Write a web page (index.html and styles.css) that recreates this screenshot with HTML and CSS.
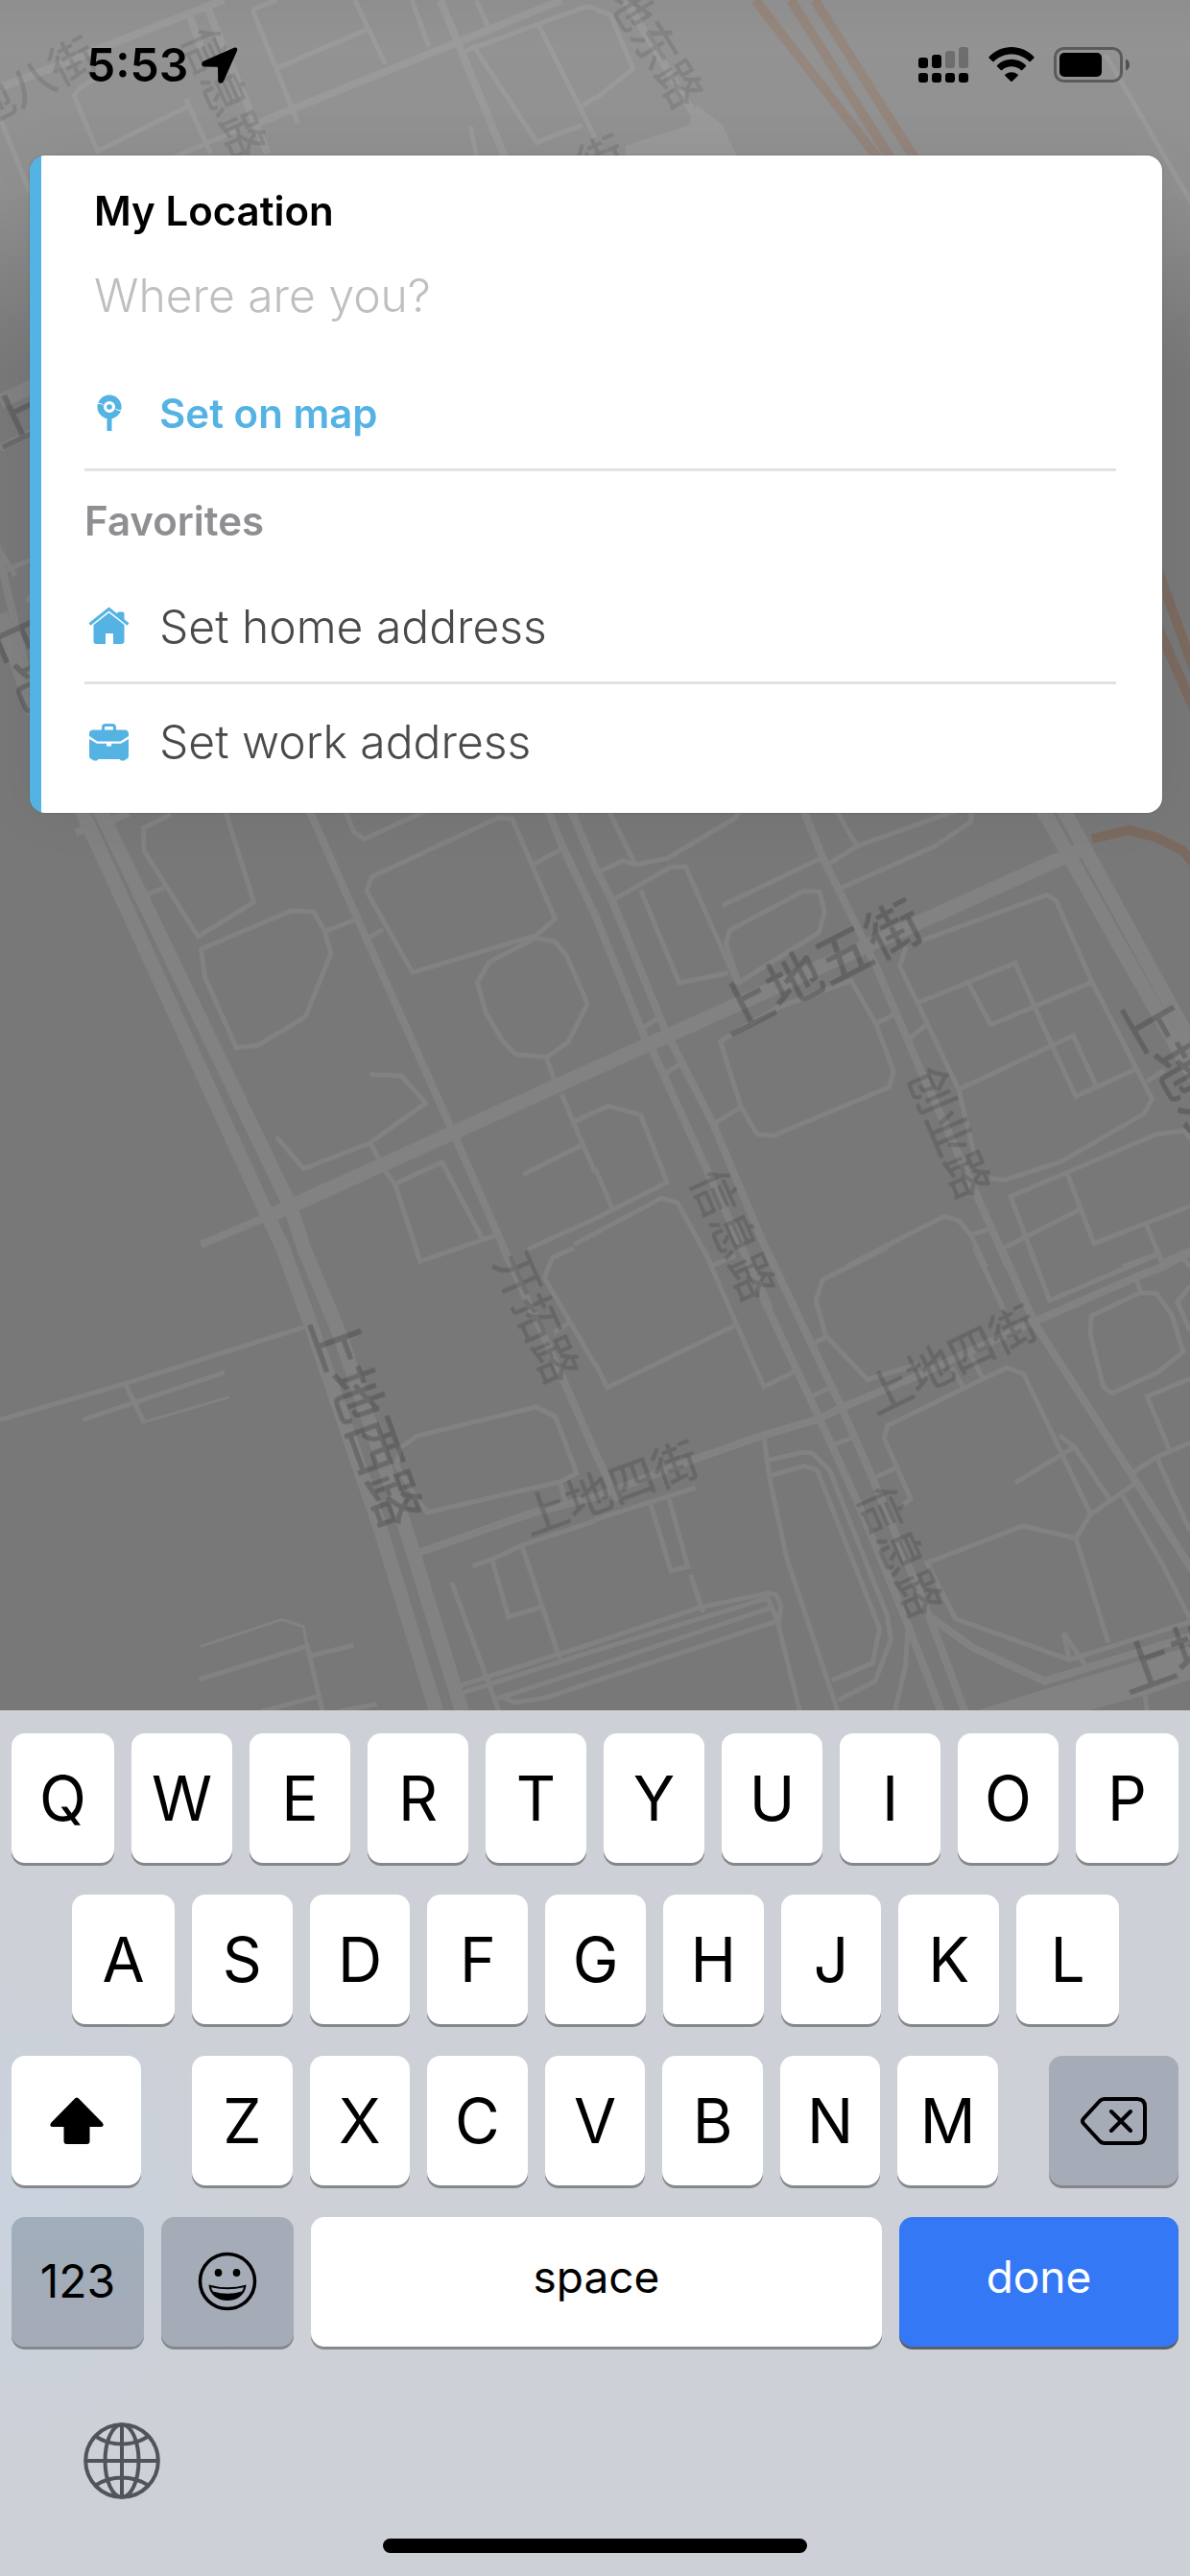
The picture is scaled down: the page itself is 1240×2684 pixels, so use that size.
FILE: index.html
```html
<!DOCTYPE html>
<html lang="en">
<head>
    <meta charset="UTF-8">
    <meta name="viewport" content="width=device-width, initial-scale=1.0">
    <title>My Location</title>
    <link rel="stylesheet" href="styles.css">
</head>
<body>
    <main class="map-area">
        <!-- Map -->
        <svg class="map" viewBox="0 0 1240 1782" preserveAspectRatio="xMidYMin slice" aria-hidden="true">
            <defs>
                <linearGradient id="fade" x1="0" y1="0" x2="0" y2="1">
                    <stop offset="0" stop-color="#fff" stop-opacity=".17"/>
                    <stop offset=".12" stop-color="#fff" stop-opacity=".2"/>
                    <stop offset=".5" stop-color="#fff" stop-opacity=".18"/>
                    <stop offset=".85" stop-color="#fff" stop-opacity=".04"/>
                    <stop offset="1" stop-color="#fff" stop-opacity="0"/>
                </linearGradient>
            </defs>

            <g class="roads">
                <!-- north west -->
                <g transform="scale(.3954 .3333)">
                    <path class="mid" d="M0 275L545 20L590 0M545 20L705 480M500 50L530 150M680 385L1210 130L1480 0M1160 0L1330 490"/>
                    <path d="M490 310L555 480M0 370L78 600M260 480L195 300L210 275L260 240M260 470L500 330M460 490L620 410M665 30L770 340L785 385M665 30L730 0M725 215L970 90M935 0L1015 200M1085 0L1130 145M1255 0L1285 80M1225 160L1545 20L1568 25M1245 140L1415 445L1535 390M1420 80L1568 430M1530 335L1568 305M1240 395L1255 485"/>
                    <path class="wide" d="M0 1255L90 1205"/>
                    <path class="mid" d="M0 1400L90 1350M-20 1650L90 2200"/>
                    <path d="M0 1790L90 1745M0 1720L40 1800M70 1880L90 1850"/>
                    <path class="wide" d="M0 1920L90 2230"/>
                </g>
                <!-- north east -->
                <g transform="translate(620 0) scale(.3954 .3333)">
                    <path class="mid" d="M80 0L265 365"/>
                    <path d="M0 30L40 45L100 215L0 310M1345 170L1575 640M1490 1830L1580 2080"/>
                    <path class="area" d="M80 455L250 390L255 350L270 330L335 390L375 490L80 490Z"/>
                </g>
                <!-- middle west -->
                <g transform="translate(0 840) scale(.3954 .3333)">
                    <path class="wide" d="M210 0L705 1280L745 1380L825 1640L1000 2250L1150 2830M258 0L765 1250L800 1380L895 1650L1075 2280L1218 2830M720 1275L1568 820"/>
                    <path class="mid" d="M530 1370L720 1275M810 0L1190 1010L1350 1440M1440 0L1480 120L1568 340M1500 0L1568 190M200 82L250 60M290 45L340 20"/>
                    <path d="M450 25L378 68L380 140L522 407L669 300L590 0M390 275L432 255M530 447L768 326L827 330L855 390L872 460L805 658L680 747L623 755L540 535ZM855 392L935 355M972 410L1010 385M905 0L933 82L960 102L1150 0M980 220L1315 35L1350 40L1463 352L1415 402L1087 520L966 265ZM1408 180L1478 135M1410 412L1463 424L1492 465L1548 617L1497 738L1440 785L1358 775L1325 735L1280 645L1258 550L1290 487ZM1440 785L1465 870M1480 900L1510 985L1568 1145M1515 985L1568 955M1378 1152L1535 1058M975 838L1058 843L1122 928L975 1052L800 1133L728 1033M975 1052L1000 1105M1015 1140L1042 1185L1107 1423L1310 1340M1042 1180L1165 1113L1270 1350M1390 1385L1568 1290"/>
                </g>
                <!-- middle east -->
                <g transform="translate(620 840) scale(.3954 .3333)">
                    <path class="wide" d="M0 820L1280 135M1175 0L1580 850M1230 0L1580 760"/>
                    <path class="mid" d="M0 190L45 295L185 700L310 990L470 1440M0 340L130 720L150 760L300 1150L460 1570M545 0L600 160L700 400L740 500L860 830L1000 1200L1090 1440"/>
                    <path d="M30 0L105 180M10 205L75 170L105 183L190 163L372 35L380 0M45 295L200 190L238 188L375 555M120 262L222 552L350 522M335 310L600 160M620 178L690 125L960 10M630 0L690 125M650 255L895 125L992 48L990 0M380 550L345 430L355 388L550 265L592 267L605 330L590 395ZM860 420L1190 278L1215 295L1310 550L1468 915L1448 960L1230 1110L1080 1168L1040 1163M820 440L803 500L850 615L958 885L1000 1090M850 615L1107 490L1205 750L1267 907L1425 822M985 555L1043 683L1310 550M960 885L1260 717L1325 885M330 735L480 630L675 545L740 680L787 830L775 878L470 1030L427 1025L385 940ZM740 680L790 650M830 725L870 685M310 995L385 940M130 690L170 660M180 840L225 805M1455 860L1500 825M0 955L35 937L120 965L190 1175L0 1290M0 1130L45 1255M-55 1370L175 1225L218 1240L310 1440M660 1440L920 1282L958 1295L990 1340L1030 1440M990 1340L1045 1320M1165 1440L1095 1220L1480 1025L1555 1015L1568 1040M1245 1150L1315 1367L1568 1250M1070 1385L1275 1262M1450 1300L1495 1425L1568 1385M1390 1440L1480 1400"/>
                </g>
                <!-- south west -->
                <g transform="translate(0 1300) scale(.3954 .3333)">
                    <path class="mid" d="M1325 0L1350 60L1480 400L1568 640L1630 790M1100 955L1400 830L1568 780"/>
                    <path d="M0 538L330 425L810 245M218 538L592 390M330 425L380 547M525 1350L810 1245L850 1450M820 1275L932 1243M690 1450L845 1400M890 1450L993 1427M1513 0L1455 32L1435 95L1568 365M1460 265L1500 235M1055 625L1100 588L1412 498L1463 527L1520 705L1475 732L1127 827L1100 790L1045 680ZM1475 732L1490 790M1245 995L1295 975L1375 930L1568 855M1298 980L1340 1155L1430 1122M1375 930L1475 1285M1190 1045L1315 1450M1215 1368L1568 1235M1222 1390L1568 1260M1310 1410L1568 1310M1325 1405L1355 1422L1435 1408L1568 1355"/>
                    <path class="thin" d="M380 545L605 467M528 1247L743 1162L800 1185L808 1240"/>
                </g>
                <!-- south east -->
                <g transform="translate(620 1300) scale(.3954 .3333)">
                    <path class="mid" d="M0 780L265 660L435 590L590 535L650 500L850 400L1160 230L1430 90L1495 60L1568 15M450 0L570 300L650 500L735 730L880 1150L975 1450M440 150L590 530L690 790L825 1180L912 1450M1070 0L1160 240L1420 720L1575 1010M885 1155L995 1250L1185 1355L1568 1215"/>
                    <path d="M285 0L445 435L532 385M310 55L370 25M0 360L32 437L375 240M770 0L600 100L582 165L608 275L718 412L850 365M575 300L608 280M570 465L615 440M630 615L675 595M735 720L800 685M1000 0L1080 200M1145 0L1198 165L1485 20L1475 0M1485 20L1495 50M1425 90L1438 140M1308 212L1438 140L1480 143L1520 210L1550 325L1483 390L1362 455L1340 435L1305 270ZM1568 120L1535 170L1568 260M1550 30L1568 60M1568 410L1455 465L1515 635M1568 610L1480 655L1420 700M1480 655L1568 885M1305 830L1130 395L1085 375L772 555L762 595L832 785L805 810M940 375L970 435M990 335L1020 405M1107 735L1260 625M1225 587L1265 625L1355 785M1425 735L1305 835L1267 908L1127 870L875 985L950 1160L1250 1288L1568 1170M1267 908L1353 1235M1390 775L1500 1000L1568 1160M1250 1288L1235 1205L1295 1310M445 595L460 720L505 970L640 1450M455 665L545 640L572 642L618 695L770 1150L780 1225L738 1355L640 1415M465 712L550 682L585 695L750 1190L732 1298L625 1352M825 1180L818 1310L790 1450M0 850L265 750M145 795L200 1010L245 998L195 785M252 1022L285 1140M0 1235L275 1125L455 1080L478 1085L490 1120L485 1165L0 1355M0 1260L455 1095L480 1165L540 1450M0 1310L465 1125M1450 1400L1455 1450"/>
                    <path class="area" d="M1000 1450L1200 1375L1568 1245L1568 1350L1450 1400L1290 1450Z"/>
                </g>
            </g>

            <!-- highways -->
            <g class="highways">
                <path d="M787 0L915 165M824 0L928 165M849 0L953 165M1205 590L1245 700M1205 650L1245 740"/>
                <path d="M1138 874L1176 865L1204 872L1232 886L1246 902"/>
            </g>

            <!-- street names -->
            <g class="streets major">
                <text transform="translate(854 1009) rotate(-27)" y="20">上地五街</text>
                <text transform="translate(380 1480) rotate(70)" y="20">上地西路</text>
                <text class="from-start" transform="translate(1185 1040) rotate(60)" y="20">上地东路</text>
                <text class="from-start" transform="translate(1168 1746) rotate(-20)" y="20">上地三街</text>
                <text transform="translate(18 437) rotate(-25)" y="20">上</text>
                <text class="from-start" transform="translate(3 632) rotate(66)" y="20">上地</text>
            </g>
            <g class="streets minor">
                <text transform="translate(989 1180) rotate(67)" y="17">创业路</text>
                <text transform="translate(764 1287) rotate(66)" y="17">信息路</text>
                <text transform="translate(559 1373) rotate(66)" y="17">开拓路</text>
                <text transform="translate(991 1417) rotate(-26)" y="17">上地四街</text>
                <text transform="translate(636 1551) rotate(-20)" y="17">上地四街</text>
                <text transform="translate(938 1617) rotate(66)" y="17">信息路</text>
            </g>
            <rect width="1240" height="400" fill="url(#fade)"/>
            <g class="streets faint">
                <text transform="translate(233 97) rotate(66)" y="17">信息路</text>
                <text class="from-end" transform="translate(97 53) rotate(-28)" y="17">上地八街</text>
                <text class="from-end" transform="translate(721 108) rotate(58)" y="18">上地东路</text>
                <text transform="translate(627 166) rotate(-25)" y="17">街</text>
            </g>
        </svg>

        <!-- Status bar -->
        <header class="status-bar">
            <div class="status-left">
                <span class="time">5:53</span>
                <svg width="38" height="38" viewBox="0 0 38 38" aria-hidden="true">
                    <path d="M34.5.6L2.5 14.5C-.8 16-.6 20.500 3 20.500L16 20.700Q17 20.700 17 21.700L17.200 34.500C17.200 38.500 21.500 38.700 23 35.500L37 4C38 1.600 36.400-.2 34.500.6Z"/>
                </svg>
            </div>
            <div class="status-right">
                <svg width="53" height="38" viewBox="0 0 53 38" aria-hidden="true">
                    <rect x="0" y="11" width="10" height="11" rx="3"/>
                    <rect x="14" y="8" width="10" height="14" rx="3"/>
                    <g opacity=".25">
                        <rect x="28" y="4" width="10" height="18" rx="3"/>
                        <rect x="42" y="0" width="10" height="22" rx="3"/>
                    </g>
                    <rect x="0" y="27" width="10" height="10" rx="3"/>
                    <rect x="14" y="27" width="10" height="10" rx="3"/>
                    <rect x="28" y="27" width="10" height="10" rx="3"/>
                    <rect x="42" y="27" width="10" height="10" rx="3"/>
                </svg>
                <svg width="48" height="38" viewBox="0 0 48 38" aria-hidden="true">
                    <path d="M.6 10.300C13.500-3.400 34.500-3.400 47.400 10.300Q48 11 47.400 11.600L43.700 15.100Q43 15.700 42.400 15.100C32.300 5.100 15.700 5.100 5.600 15.100Q5 15.700 4.300 15.100L.6 11.600Q0 11 .6 10.300Z"/>
                    <path d="M9 19C17.300 10.700 30.700 10.700 39 19Q39.600 19.700 39 20.300L35.200 24Q34.500 24.600 33.800 24C28.200 19 19.800 19 14.200 24Q13.500 24.600 12.800 24L9 20.300Q8.400 19.700 9 19Z"/>
                    <path d="M17.400 28.600C21.200 25.300 26.800 25.300 30.600 28.600Q31.200 29.200 30.600 29.900L24.700 35.700Q24 36.300 23.300 35.700L17.400 29.900Q16.800 29.200 17.400 28.600Z"/>
                </svg>
                <svg width="80" height="38" viewBox="0 0 80 38" aria-hidden="true">
                    <rect x="1.500" y="1.500" width="69" height="34" rx="9" fill="none" stroke="#000" stroke-opacity=".38" stroke-width="3"/>
                    <rect x="6" y="6" width="44" height="25" rx="5"/>
                    <path d="M75 12.500C80.300 14 80.300 23 75 24.500Z" fill-opacity=".45"/>
                </svg>
            </div>
        </header>

        <!-- Location card -->
        <section class="card">
            <div class="field">
                <label for="location">My Location</label>
                <input type="text" id="location" placeholder="Where are you?">
            </div>
            <button type="button" class="row row-map">
                <svg width="52" height="40" viewBox="0 0 52 40" aria-hidden="true">
                    <circle cx="26" cy="14" r="9.300" fill="none" stroke="currentColor" stroke-width="6.500"/>
                    <circle cx="26" cy="14" r="2.800"/>
                    <rect x="23.500" y="25" width="5" height="14"/>
                    <path d="M13.500 10.500Q17 9.500 19.500 12M32.500 16Q35 18.500 38.500 17.500" fill="none" stroke="#fff" stroke-width="1"/>
                </svg>
                <span>Set on map</span>
            </button>
            <h2>Favorites</h2>
            <button type="button" class="row">
                <svg width="52" height="40" viewBox="0 0 52 40" aria-hidden="true">
                    <path d="M5.500 18.500L25.500 2.500L45.500 18.500" fill="none" stroke="currentColor" stroke-width="3"/>
                    <path d="M34 9V7.500Q34 5.500 36 5.500H39.500Q41.500 5.500 41.500 7.500V15Z"/>
                    <path d="M9.500 19L25.500 6.500L41.500 19V36Q41.500 39 38.500 39H30V28H22V39H12.500Q9.500 39 9.500 36Z"/>
                </svg>
                <span>Set home address</span>
            </button>
            <button type="button" class="row">
                <svg width="52" height="40" viewBox="0 0 52 40" aria-hidden="true">
                    <path d="M19.500 8V5Q19.500 2.500 22 2.500H29Q31.500 2.500 31.500 5V8" fill="none" stroke="currentColor" stroke-width="3"/>
                    <path d="M9 7.500H42Q46 7.500 46 11.500V14L37.500 19.500H13.500L5 14V11.500Q5 7.500 9 7.500Z"/>
                    <path d="M5 17L13 21.700H23V24.500H28V21.700H38L46 17V35Q46 37.500 43.500 38L41.500 39.500H38L36.500 38H14.500L13 39.500H9.500L7.500 38Q5 37.500 5 35Z"/>
                </svg>
                <span>Set work address</span>
            </button>
        </section>
    </main>

    <!-- Keyboard -->
    <section class="keyboard">
        <div class="keys keys-letters">
            <button type="button" class="key">Q</button>
            <button type="button" class="key">W</button>
            <button type="button" class="key">E</button>
            <button type="button" class="key">R</button>
            <button type="button" class="key">T</button>
            <button type="button" class="key">Y</button>
            <button type="button" class="key">U</button>
            <button type="button" class="key">I</button>
            <button type="button" class="key">O</button>
            <button type="button" class="key">P</button>
        </div>
        <div class="keys keys-letters keys-inset">
            <button type="button" class="key">A</button>
            <button type="button" class="key">S</button>
            <button type="button" class="key">D</button>
            <button type="button" class="key">F</button>
            <button type="button" class="key">G</button>
            <button type="button" class="key">H</button>
            <button type="button" class="key">J</button>
            <button type="button" class="key">K</button>
            <button type="button" class="key">L</button>
        </div>
        <div class="keys keys-split">
            <button type="button" class="key key-side" aria-label="shift">
                <svg width="58" height="50" viewBox="0 0 58 50" aria-hidden="true">
                    <path d="M27.500 1Q29 0 30.500 1L56 27Q58 31 54 31H42.500V46Q42.500 49 39.500 49H18.500Q15.500 49 15.500 46V31H4Q0 31 2 27Z"/>
                </svg>
            </button>
            <div class="keys keys-group">
                <button type="button" class="key">Z</button>
                <button type="button" class="key">X</button>
                <button type="button" class="key">C</button>
                <button type="button" class="key">V</button>
                <button type="button" class="key">B</button>
                <button type="button" class="key">N</button>
                <button type="button" class="key">M</button>
            </div>
            <button type="button" class="key key-side key-dark" aria-label="delete">
                <svg width="70" height="52" viewBox="0 0 70 52" aria-hidden="true">
                    <path d="M25 3H59Q67 3 67 11V41Q67 49 59 49H25Q22 49 20 47L3 28.500Q1 26 3 23.500L20 5Q22 3 25 3ZM32 16L52 36M52 16L32 36" fill="none" stroke="#000" stroke-width="4" stroke-linecap="round" stroke-linejoin="round"/>
                </svg>
            </button>
        </div>
        <div class="keys">
            <button type="button" class="key key-mode key-dark key-tint">123</button>
            <button type="button" class="key key-mode key-dark" aria-label="emoji">
                <svg width="62" height="62" viewBox="0 0 62 62" aria-hidden="true">
                    <circle cx="31" cy="31" r="28.500" fill="none" stroke="#000" stroke-width="3.500"/>
                    <ellipse cx="21.500" cy="22" rx="3.800" ry="4"/>
                    <ellipse cx="40.500" cy="22" rx="3.800" ry="4"/>
                    <path d="M11.500 34.500Q31 40 50.500 34.500C50 45 41 51 31 51S12 45 11.500 34.500Z"/>
                    <path d="M14 37.200Q31 41.500 48 37.200Q47.500 39.500 46 41.500Q31 46 16 41.500Q14.500 39.500 14 37.200Z" class="teeth"/>
                </svg>
            </button>
            <button type="button" class="key key-space key-word">space</button>
            <button type="button" class="key key-done key-word">done</button>
        </div>
        <button type="button" class="globe" aria-label="next keyboard">
            <svg width="80" height="80" viewBox="0 0 80 80" aria-hidden="true">
                <g fill="none" stroke="#50545b" stroke-width="4">
                    <circle cx="40" cy="40" r="37.800"/>
                    <ellipse cx="40" cy="40" rx="17.500" ry="37.800"/>
                    <path d="M40 2V78M2 40H78M12.500 14.500Q25 22.500 40 22.500T67.500 14.500M12.500 65.500Q25 57.500 40 57.500T67.500 65.500"/>
                </g>
            </svg>
        </button>
        <div class="home-bar"></div>
    </section>
</body>
</html>
```

FILE: styles.css
```css
* {
    box-sizing: border-box;
}

body {
    margin: 0;
    min-height: 100vh;
    display: flex;
    flex-direction: column;
    font-family: Inter, "Noto Sans CJK SC", sans-serif;
    color: #000;
    background: #cdd0d6;
}

button, input {
    margin: 0;
    padding: 0;
    border: none;
    background: none;
    font-family: inherit;
    color: inherit;
}

button {
    cursor: pointer;
}

/* Map */
.map-area {
    position: relative;
    flex: 1;
    overflow: hidden;
    background: #787878;
}

.map {
    position: absolute;
    top: 0;
    left: 0;
    width: 100%;
    height: 100%;
}

.roads {
    fill: none;
    stroke: #fff;
    stroke-width: 5px;
    opacity: 0.08;
}

.roads path {
    vector-effect: non-scaling-stroke;
}

.roads .thin {
    stroke-width: 3px;
}

.roads .mid {
    stroke-width: 8px;
}

.roads .wide {
    stroke-width: 15px;
}

.roads .area {
    fill: #fff;
    stroke: none;
}

.highways {
    fill: none;
    stroke: #7b6a5f;
    stroke-width: 10px;
}

.streets {
    font-family: "Noto Sans CJK SC", sans-serif;
    font-weight: 500;
    text-anchor: middle;
}

.major {
    font-size: 58px;
    fill: rgba(0, 0, 0, 0.19);
}

.minor {
    font-size: 48px;
    fill: rgba(0, 0, 0, 0.14);
}

.faint {
    font-size: 48px;
    fill: rgba(0, 0, 0, 0.1);
}

.from-start {
    text-anchor: start;
}

.from-end {
    text-anchor: end;
}

/* Status bar */
.status-bar {
    position: relative;
    display: flex;
    justify-content: space-between;
    align-items: center;
    height: 136px;
    padding: 0 62px 0 90px;
}

.status-left {
    display: flex;
    align-items: center;
    gap: 14px;
}

.status-right {
    display: flex;
    align-items: center;
    gap: 20px;
}

.time {
    font-size: 48px;
    line-height: 56px;
    font-weight: 600;
}

/* Card */
.card {
    position: relative;
    margin: 26px 29px 0 31px;
    padding: 32px 48px 15px 57px;
    border-radius: 16px;
    background: linear-gradient(to right, #55b3e4 12px, #fff 12px);
    box-shadow: 0 0 2px rgba(0, 0, 0, 0.3), 0 0 60px rgba(0, 0, 0, 0.06);
}

.field {
    display: flex;
    flex-direction: column;
    padding: 0 0 4px 10px;
}

.field label {
    font-size: 42px;
    line-height: 52px;
    font-weight: 600;
}

.field input {
    width: 100%;
    height: 122px;
    font-size: 48px;
    font-weight: 300;
    outline: none;
}

.field input::placeholder {
    color: #bfbfc2;
    opacity: 1;
}

.row {
    display: flex;
    align-items: center;
    gap: 26px;
    width: 100%;
    height: 119px;
    border-bottom: 3px solid #e2e2e2;
    font-size: 48px;
    font-weight: 300;
    color: #4a4a4a;
}

.row:last-child {
    border-bottom: none;
}

.row svg {
    fill: #55b3e4;
    color: #55b3e4;
}

.row-map {
    font-size: 42px;
    font-weight: 600;
    color: #55b3e4;
}

.card h2 {
    margin: 0;
    font-size: 42px;
    line-height: 103px;
    font-weight: 600;
    color: #8e8e93;
}

/* Keyboard */
.keyboard {
    display: flex;
    flex-direction: column;
    gap: 33px;
    padding: 24px 12px;
    background: radial-gradient(circle at 0 520px, #c9d2de, #cdd0d6 300px);
}

.keys {
    display: flex;
    gap: 18px;
}

.keys-inset {
    padding: 0 62px 0 63px;
}

.keys-split {
    gap: 53px;
}

.keys-group {
    flex: 1;
}

.key {
    display: flex;
    flex: 1;
    justify-content: center;
    align-items: center;
    height: 135px;
    border-radius: 14px;
    background: #fff;
    box-shadow: 0 3px 0 #85878c;
    font-size: 64px;
}

/* the outer keys of a letter row are slightly wider */
.keys-letters .key:first-child,
.keys-letters .key:last-child {
    flex: 0 0 107px;
}

.key-side {
    flex: 0 0 135px;
}

.key-dark {
    background: #a5abb7;
}

.key-tint {
    background: linear-gradient(#a0aebb, #a5abb7);
}

.key-mode {
    flex: 0 0 138px;
    padding-bottom: 2px;
    font-size: 48px;
}

.key-word {
    padding-bottom: 12px;
    font-size: 46px;
}

.key-space {
    flex: 1;
}

.key-done {
    flex: 0 0 291px;
    background: #3478f6;
    box-shadow: 0 3px 0 #5c6068;
    color: #fff;
}

.teeth {
    fill: #a5abb7;
}

.globe {
    width: 80px;
    height: 80px;
    margin: 46px 0 0 75px;
}

.home-bar {
    width: 442px;
    height: 15px;
    margin: 8px auto 0;
    border-radius: 8px;
    background: #000;
}
```
